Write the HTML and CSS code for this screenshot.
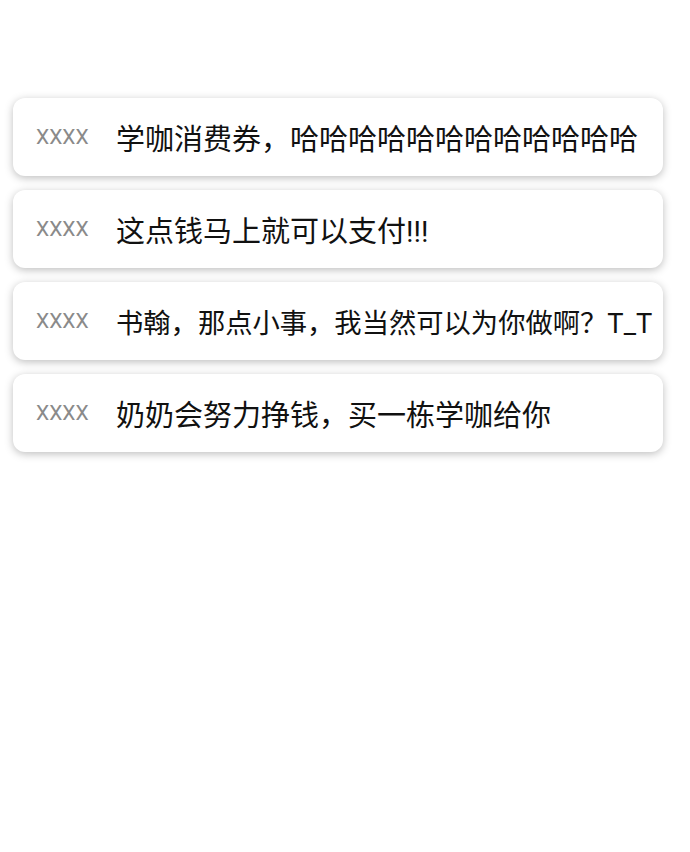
FILE: index.html
```html
<!DOCTYPE html>
<html lang="zh">
<head>
<meta charset="utf-8">
<link rel="stylesheet" href="styles.css">
</head>
<body>
<div class="list">
  <div class="card"><span class="name">XXXX</span><span class="msg">学咖消费券，哈哈哈哈哈哈哈哈哈哈哈哈</span></div>
  <div class="card"><span class="name">XXXX</span><span class="msg">这点钱马上就可以支付!!!</span></div>
  <div class="card"><span class="name">XXXX</span><span class="msg msg-fit">书翰，那点小事，我当然可以为你做啊？T_T</span></div>
  <div class="card"><span class="name">XXXX</span><span class="msg">奶奶会努力挣钱，买一栋学咖给你</span></div>
</div>
</body>
</html>
```
FILE: styles.css
```css
html, body {
  margin: 0;
  padding: 0;
  background: #ffffff;
}
.list {
  display: flex;
  flex-direction: column;
  gap: 14px;
  padding: 98px 0 40px 13px;
  width: 650px;
}
.card {
  display: flex;
  align-items: center;
  height: 78px;
  box-sizing: border-box;
  padding-left: 23px;
  background: #ffffff;
  border-radius: 12px;
  box-shadow: 0 2px 9px rgba(0, 0, 0, 0.26);
  white-space: nowrap;
  overflow: hidden;
}
.name {
  width: 80px;
  flex: none;
  font-family: Roboto, "Noto Sans", sans-serif;
  font-size: 21px;
  color: #8a8a8a;
}
.msg {
  font-family: Roboto, "Noto Sans CJK SC", sans-serif;
  font-size: 29px;
  color: #111111;
}
.msg-fit {
  font-size: 27.3px;
}
```
